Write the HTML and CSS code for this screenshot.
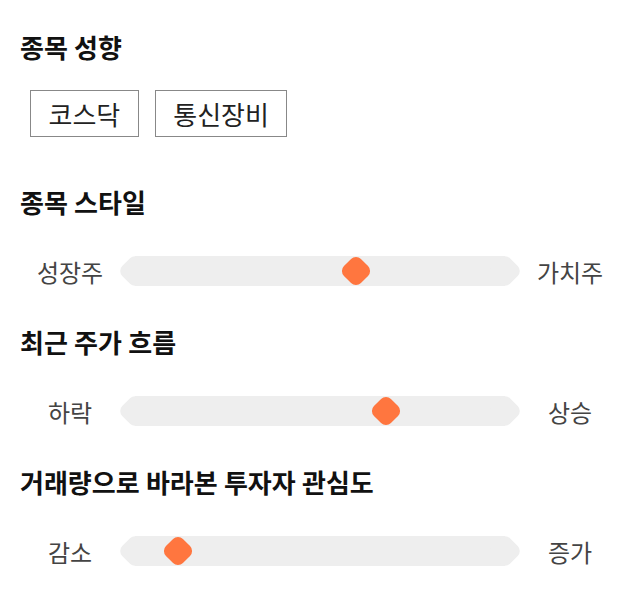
FILE: index.html
```html
<!DOCTYPE html>
<html lang="ko">
<head>
  <meta charset="UTF-8" />
  <title>종목 분석</title>
  <meta name="viewport" content="width=device-width, initial-scale=1.0" />
  <link rel="stylesheet" href="styles.css">
</head>
<body>
  <div class="container">
    <section class="section">
      <h2>종목 성향</h2>
      <div class="tags">
        <span class="tag">코스닥</span>
        <span class="tag">통신장비</span>
      </div>
    </section>

    <section class="section">
      <h2>종목 스타일</h2>
      <div class="slider-row">
        <span class="label">성장주</span>
        <div class="track">
          <span class="thumb" style="left: 59.7%;"></span>
        </div>
        <span class="label">가치주</span>
      </div>
    </section>

    <section class="section">
      <h2>최근 주가 흐름</h2>
      <div class="slider-row">
        <span class="label">하락</span>
        <div class="track">
          <span class="thumb" style="left: 67.8%;"></span>
        </div>
        <span class="label">상승</span>
      </div>
    </section>

    <section class="section">
      <h2>거래량으로 바라본 투자자 관심도</h2>
      <div class="slider-row">
        <span class="label">감소</span>
        <div class="track">
          <span class="thumb" style="left: 11.6%;"></span>
        </div>
        <span class="label">증가</span>
      </div>
    </section>
  </div>
</body>
</html>
```

FILE: styles.css
```css
body {
  margin: 0;
  background: #fff;
  color: #111;
  font-family: 'Noto Sans CJK KR', 'Noto Sans', sans-serif;
}

.container {
  padding: 31px 20px 20px;
}

.section {
  padding-bottom: 30px;
}

h2 {
  margin: 0 0 28px;
  font-size: 26px;
  line-height: 32px;
  font-weight: 700;
  word-spacing: -1px;
  color: #111;
}

.tags {
  display: flex;
  gap: 16px;
  margin: -1px 0 0 10px;
  padding-bottom: 19px;
}

.tag {
  border: 1px solid #888;
  padding: 7px 17.5px;
  font-size: 26px;
  line-height: 31px;
  color: #222;
}

.slider-row {
  display: grid;
  grid-template-columns: 100px 1fr 100px;
  align-items: center;
  height: 50px;
}

.label {
  text-align: center;
  font-size: 24px;
  color: #444;
}

/* track body plus two rounded-diamond caps */
.track {
  position: relative;
  height: 30px;
  margin: 0 15px;
  background: #eee;
}

.track::before,
.track::after {
  content: "";
  position: absolute;
  top: 50%;
  left: 0;
  width: 25px;
  height: 25px;
  background: #eee;
  border-radius: 7px;
  transform: translate(-50%, -50%) rotate(45deg);
}

.track::after {
  left: 100%;
}

.thumb {
  position: absolute;
  top: 50%;
  z-index: 1;
  width: 24px;
  height: 24px;
  background: #ff763f;
  border-radius: 7px;
  transform: translate(-50%, -50%) rotate(45deg);
}
```
